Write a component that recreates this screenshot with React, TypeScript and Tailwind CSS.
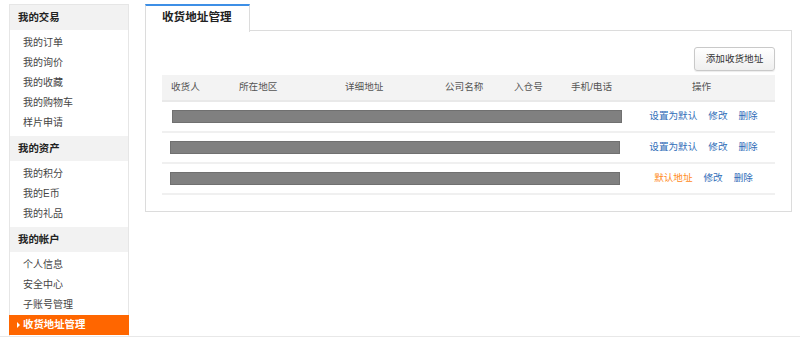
import React from "react";

const font = { fontFamily: '"Liberation Sans", "Noto Sans CJK SC", sans-serif' };

function SideHeader({ label }: { label: string }) {
  return (
    <div className="h-[25px] bg-[#f2f2f2] pl-[8px] text-[10.4px] font-bold leading-[25px] text-[#222]">
      {label}
    </div>
  );
}

function SideItem({ label }: { label: string }) {
  return <div className="h-[20px] pl-[13px] text-[10px] leading-[20px] text-[#444]">{label}</div>;
}

const rows = [
  { bar: "ml-[10px]", def: false },
  { bar: "ml-[8px]", def: false },
  { bar: "ml-[8px]", def: true },
];

export default function App() {
  return (
    <div className="flex h-[338px] w-[800px] flex-col bg-white" style={font}>
      <div className="flex h-[336px] items-stretch">
        {/* Sidebar */}
        <div className="ml-[9px] mt-[4px] flex w-[120px] flex-col border-x border-t border-[#e6e6e6]">
          <SideHeader label="我的交易" />
          <div className="py-[3px]">
            <SideItem label="我的订单" />
            <SideItem label="我的询价" />
            <SideItem label="我的收藏" />
            <SideItem label="我的购物车" />
            <SideItem label="样片申请" />
          </div>
          <SideHeader label="我的资产" />
          <div className="py-[3px]">
            <SideItem label="我的积分" />
            <SideItem label="我的E币" />
            <SideItem label="我的礼品" />
          </div>
          <SideHeader label="我的帐户" />
          <div className="pt-[3px]">
            <SideItem label="个人信息" />
            <SideItem label="安全中心" />
            <SideItem label="子账号管理" />
          </div>
          <div className="-mx-px flex h-[20px] items-center bg-[#ff6600] pl-[8px] text-[10.4px] font-bold text-white">
            <span className="mr-[3px] inline-block h-0 w-0 border-y-[3px] border-l-[3px] border-y-transparent border-l-white" />
            收货地址管理
          </div>
        </div>

        {/* Main */}
        <div className="ml-[16px] mt-[4px] flex w-[647px] flex-col self-start">
          <div className="flex h-[27px]">
            <div className="relative z-10 -mb-px h-[28px] w-[105px] border-x border-t-2 border-[#dcdcdc] border-t-[#3d8fe6] bg-white pl-[16px] text-[11.6px] font-bold leading-[22px] text-[#222]">
              收货地址管理
            </div>
            <div className="flex-1 border-b border-[#dcdcdc]" />
          </div>
          <div className="border-x border-b border-[#dcdcdc] px-[16px] pb-[16px] pt-[16px]">
            <div className="flex justify-end">
              <button className="h-[24px] w-[81px] rounded-[3px] border border-[#c9c9c9] bg-gradient-to-b from-white to-[#efefef] text-[9.6px] text-[#333] shadow-[0_1px_1px_rgba(0,0,0,0.08)]">
                添加收货地址
              </button>
            </div>
            <div className="mt-[4px] flex h-[27px] items-center border-b-2 border-[#e9e9e9] bg-[#f3f3f3] text-[9.6px] text-[#555]">
              <div className="w-[77px] pl-[9px]">收货人</div>
              <div className="w-[106px]">所在地区</div>
              <div className="w-[100px]">详细地址</div>
              <div className="w-[69px]">公司名称</div>
              <div className="w-[57px]">入仓号</div>
              <div className="w-[57px]">手机/电话</div>
              <div className="flex-1 text-center">操作</div>
            </div>
            {rows.map((r, i) => (
              <div key={i} className="flex h-[31px] items-center border-b-2 border-[#f0f0f0]">
                <div className="w-[466px]">
                  <div className={`${r.bar} h-[13px] w-[450px] border border-[#707070] bg-[#808080]`} />
                </div>
                <div className="flex flex-1 justify-center gap-[11px] pl-[4px] text-[9.6px]">
                  {r.def ? (
                    <span className="text-[#ff8a22]">默认地址</span>
                  ) : (
                    <span className="text-[#2f6db8]">设置为默认</span>
                  )}
                  <span className="text-[#2f6db8]">修改</span>
                  <span className="text-[#2f6db8]">删除</span>
                </div>
              </div>
            ))}
          </div>
        </div>
      </div>
      <div className="h-px w-full bg-[#e8e8e8]" />
    </div>
  );
}
